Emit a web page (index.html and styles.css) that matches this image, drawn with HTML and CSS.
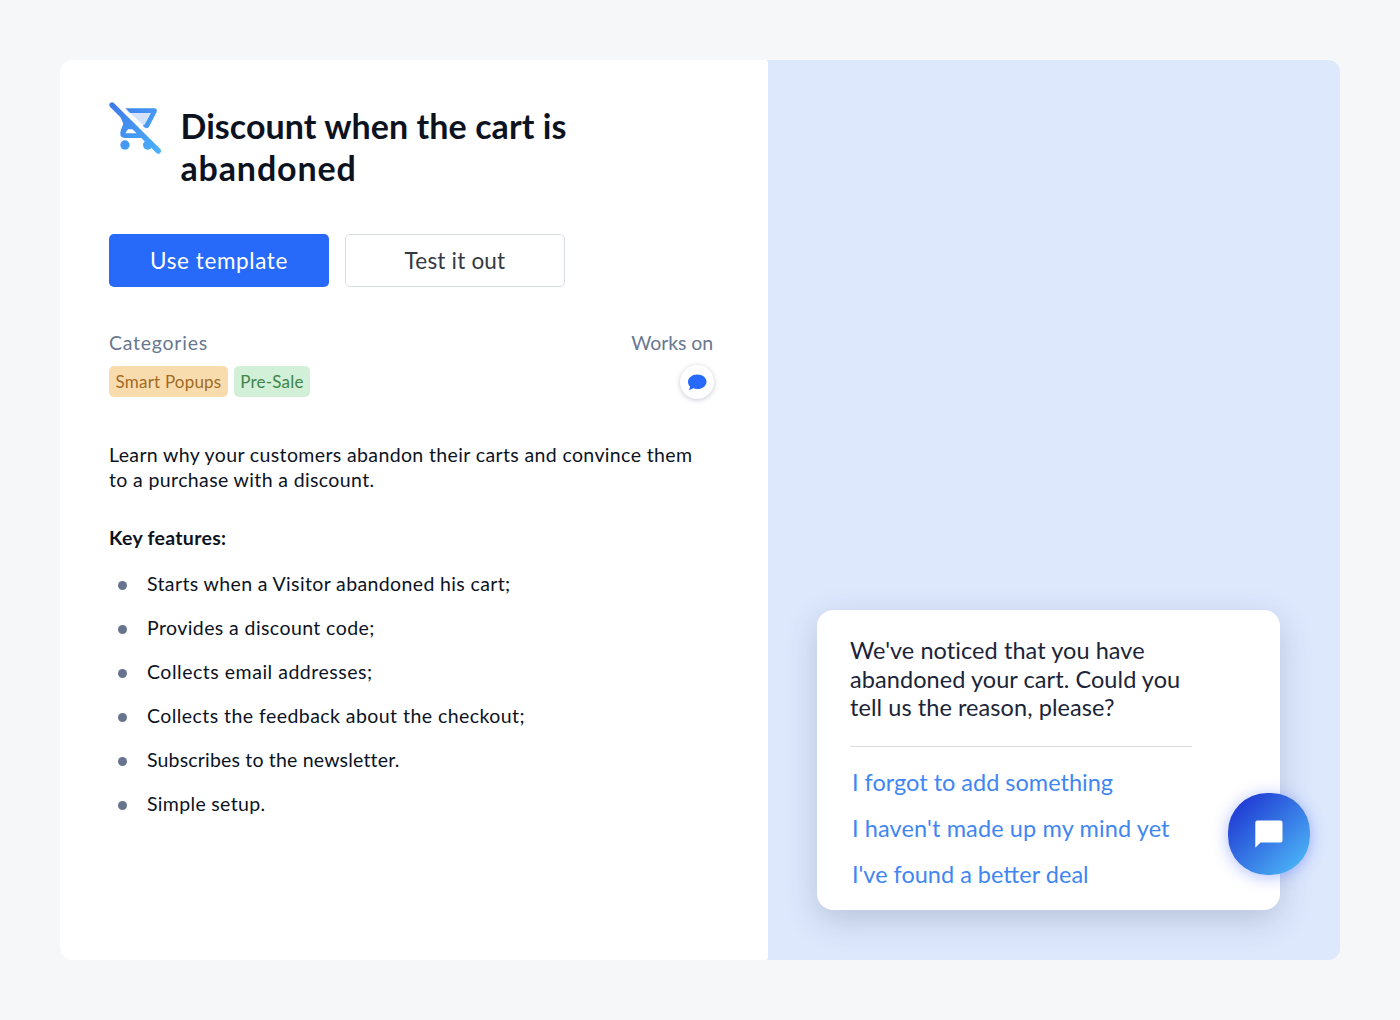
FILE: index.html
```html
<!DOCTYPE html>
<html lang="en">
<head>
<meta charset="utf-8">
<title>Discount when the cart is abandoned</title>
<link rel="stylesheet" href="styles.css">
</head>
<body>
<main class="card">
  <section class="details">
    <header class="heading">
      <svg class="cart" viewBox="24 30 168 168" aria-hidden="true">
        <defs>
          <linearGradient id="cartFill" gradientUnits="userSpaceOnUse" x1="30" y1="40" x2="180" y2="190">
            <stop offset="0" stop-color="#3f78e8"/>
            <stop offset="1" stop-color="#4ab2fa"/>
          </linearGradient>
        </defs>
        <path d="M84 62H160L136 112Z" fill="#d3e3fc"/>
        <path fill="url(#cartFill)" d="M76 55H163Q173 56 170 66L147 110Q142 118 133 112L127 106Q132 107 135 102L153 69H90Z"/>
        <path fill="url(#cartFill)" fill-rule="evenodd" d="M54 62L70 101L63 119Q55 142 74 144H140L110 114ZM76 130L84 118H100L111 130Z"/>
        <circle cx="75" cy="165" r="14" fill="url(#cartFill)"/>
        <circle cx="143" cy="165" r="14" fill="url(#cartFill)"/>
        <path d="M36 45L175 183" stroke="url(#cartFill)" stroke-width="16" stroke-linecap="round"/>
      </svg>
      <h1 class="title"><span class="t1">Discount when the cart is</span><br><span class="t2">abandoned</span></h1>
    </header>
    <div class="actions">
      <button class="btn btn-primary">Use template</button>
      <button class="btn btn-outline">Test it out</button>
    </div>
    <div class="meta">
      <div>
        <div class="label label-wide">Categories</div>
        <div class="tags"><span class="tag tag-orange">Smart Popups</span><span class="tag tag-green">Pre-Sale</span></div>
      </div>
      <div class="works">
        <div class="label label-tight">Works on</div>
        <div class="channel">
          <svg class="bubble" viewBox="0 0 20 17" aria-hidden="true"><path fill="#2769f8" d="M10.300.6c5.200 0 9.200 3.200 9.200 7.200s-4 7.300-9.200 7.300c-1.500 0-2.900-.3-4.100-.8-1.200.9-2.600 1.500-4.500 1.500.8-1 1.300-2 1.300-3.400C1.700 11.200 1 9.600 1 7.900 1 3.900 5.100.6 10.300.6Z"/></svg>
        </div>
      </div>
    </div>
    <p class="intro">Learn why your customers abandon their carts and convince them<br>to a purchase with a discount.</p>
    <h2 class="subtitle">Key features:</h2>
    <ul class="features">
      <li><span class="f1">Starts when a Visitor abandoned his cart;</span></li>
      <li><span class="f2">Provides a discount code;</span></li>
      <li><span class="f3">Collects email addresses;</span></li>
      <li><span class="f4">Collects the feedback about the checkout;</span></li>
      <li><span class="f5">Subscribes to the newsletter.</span></li>
      <li><span class="f6">Simple setup.</span></li>
    </ul>
  </section>
  <section class="preview">
    <div class="popup">
      <p class="message">We've noticed that you have<br>abandoned your cart. Could you<br>tell us the reason, please?</p>
      <div class="options">
        <a>I forgot to add something</a>
        <a class="o2">I haven't made up my mind yet</a>
        <a>I've found a better deal</a>
      </div>
      <div class="launcher">
        <svg class="chat" viewBox="0 0 28 28" aria-hidden="true"><path fill="#fff" d="M2.500.500H25.500Q27.500.500 27.500 2.500V20.500Q27.500 22.500 25.500 22.500H5.500L.300 27.700V2.500Q.300.500 2.500.500Z"/></svg>
      </div>
    </div>
  </section>
</main>
</body>
</html>
```
FILE: styles.css
```css
* { box-sizing: border-box; }
body {
  margin: 0;
  padding: 60px;
  background: #f5f7f9;
  font-family: Lato, "Open Sans", sans-serif;
  color: #0c131f;
}
h1, h2, p, ul { margin: 0; padding: 0; }
.card {
  display: flex;
  height: 900px;
  border-radius: 12px;
  overflow: hidden;
  background: #dde8fd;
}
.details {
  width: 708px;
  padding: 40px 55px 0 48px;
  background: #fff;
  border-radius: 0 3px 3px 0;
}
.heading { display: flex; gap: 16.500px; height: 90px; }
.cart { width: 56px; height: 56px; flex: none; }
.title {
  padding-top: 5px;
  font-size: 34px;
  line-height: 42px;
  font-weight: 700;
  white-space: nowrap;
}
.t1 { letter-spacing: .07px; }
.t2 { letter-spacing: .85px; }
.actions { display: flex; gap: 16px; margin: 44px 0 0 1px; }
.btn {
  width: 220px;
  height: 53px;
  padding: 0;
  border-radius: 5px;
  font: 22.500px/50px Lato, sans-serif;
}
.btn-primary { border: 0; background: #2769f8; color: #fff; letter-spacing: .6px; }
.btn-outline { border: 1px solid #d9dde6; background: #fff; color: #343a43; letter-spacing: .2px; }
.meta { display: flex; justify-content: space-between; margin: 42px 0 0 1px; }
.label { font-size: 19.500px; line-height: 28px; color: #697790; }
.label-wide { letter-spacing: .75px; }
.label-tight { letter-spacing: -.1px; }
.tags { display: flex; gap: 6px; margin-top: 9px; }
.tag {
  height: 31px;
  border-radius: 5px;
  font-size: 17px;
  line-height: 31px;
  text-align: center;
  white-space: nowrap;
  letter-spacing: .2px;
}
.tag-orange { width: 119px; background: #f9dcae; color: #a16a24; }
.tag-green { width: 76px; background: #d2efd7; color: #3f8549; }
.works { display: flex; flex-direction: column; align-items: flex-end; }
.channel {
  display: grid;
  place-items: center;
  width: 34px;
  height: 34px;
  margin: 8px -1px 0 0;
  border-radius: 50%;
  background: #fff;
  box-shadow: 0 1px 5px rgba(30, 45, 80, .25);
}
.bubble { width: 20px; height: 17px; }
.intro { margin: 43px 0 0 1px; font-size: 19.500px; line-height: 25px; white-space: nowrap; letter-spacing: .37px; }
.subtitle { margin: 33px 0 0 1px; font-size: 19.500px; line-height: 25px; letter-spacing: .3px; }
.features { margin-top: 13px; list-style: none; }
.features li {
  display: flex;
  align-items: center;
  gap: 20px;
  height: 44px;
  padding-left: 10px;
  font-size: 19.500px;
}
.features li::before {
  content: "";
  width: 9px;
  height: 9px;
  border-radius: 50%;
  background: #68748e;
}
.features span { padding-bottom: 3px; }
.f1 { letter-spacing: .37px; }
.f2 { letter-spacing: .41px; }
.f3 { letter-spacing: .52px; }
.f4 { letter-spacing: .44px; }
.f5 { letter-spacing: .18px; }
.f6 { letter-spacing: .33px; }
.preview { display: flex; flex: 1; align-items: flex-end; padding: 0 0 50px 49px; }
.popup {
  position: relative;
  width: 462.500px;
  height: 300.500px;
  padding: 26.500px 33px;
  border-radius: 16px;
  background: #fff;
  box-shadow: 0 10px 32px rgba(50, 70, 95, .22);
  color: #1b2438;
}
.message {
  width: 342px;
  height: 111px;
  border-bottom: 1px solid #dcdde0;
  font-size: 23.500px;
  line-height: 28.600px;
  white-space: nowrap;
  letter-spacing: .07px;
}
.options { display: flex; flex-direction: column; padding: 12px 0 0 2px; color: #3f86f3; }
.options a { font-size: 23.500px; line-height: 46px; white-space: nowrap; }
.options .o2 { letter-spacing: .12px; }
.launcher {
  position: absolute;
  right: -30px;
  bottom: 35px;
  display: grid;
  place-items: center;
  width: 82px;
  height: 82px;
  border-radius: 39px;
  background: linear-gradient(135deg, #1f38d3 10%, #4ab0f5 88%);
  box-shadow: 0 2px 16px rgba(60, 90, 255, .4);
}
.chat { width: 28px; height: 28px; }
```
